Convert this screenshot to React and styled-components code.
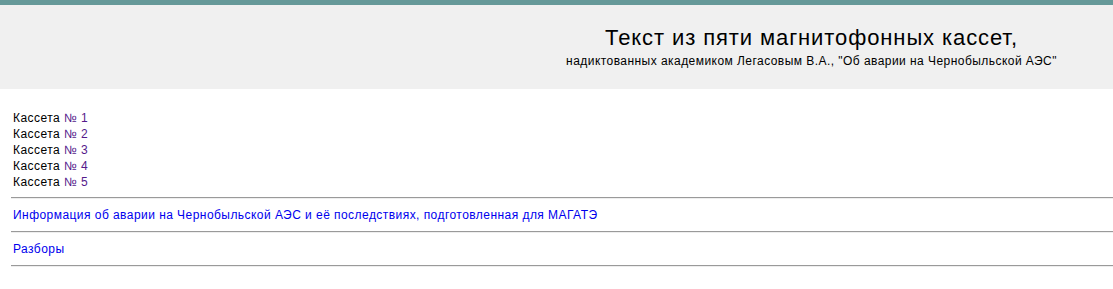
import React from "react";
import styled, { createGlobalStyle } from "styled-components";

const Global = createGlobalStyle`
  html, body { margin: 0; padding: 0; background: #ffffff; }
  body { font-family: "Liberation Sans", Arial, sans-serif; font-size: 12px; letter-spacing: 0.45px; color: #000; }
`;

const Page = styled.div`
  border-top: 5px solid #669999;
`;

const Header = styled.header`
  background: #f0f0f0;
  height: 84px;
  box-sizing: border-box;
  display: grid;
  grid-template-columns: 510px 1fr;
  padding-top: 21px;
`;

const HeaderText = styled.div`
  grid-column: 2;
  display: flex;
  flex-direction: column;
  align-items: center;
  text-align: center;
`;

const Title = styled.h1`
  margin: 0;
  font-size: 22px;
  letter-spacing: 0.9px;
  font-weight: normal;
  line-height: 24px;
`;

const Subtitle = styled.div`
  font-size: 12px;
  line-height: 16px;
  margin-top: 3px;
`;

const Content = styled.main`
  padding: 21px 0 0 11px;
`;

const CassetteList = styled.div`
  padding-left: 2px;
  line-height: 16px;
`;

const Row = styled.div`
  line-height: 16px;
`;

const Link = styled.a`
  color: ${(p) => (p.$visited ? "#551a8b" : "#0000ee")};
  text-decoration: none;
`;

const Rule = styled.hr`
  margin: ${(p) => (p.$top ?? 8)}px 0 8px;
  border: 0;
  border-top: 1px solid #9a9a9a;
  border-bottom: 1px solid #eeeeee;
  height: 0;
`;

const Section = styled.div`
  padding-left: 2px;
  line-height: 16px;
`;

export default function App() {
  return (
    <Page>
      <Global />
      <Header>
        <HeaderText>
          <Title>Текст из пяти магнитофонных кассет,</Title>
          <Subtitle>
            надиктованных академиком Легасовым В.А., "Об аварии на Чернобыльской АЭС"
          </Subtitle>
        </HeaderText>
      </Header>
      <Content>
        <CassetteList>
          {[1, 2, 3, 4, 5].map((n) => (
            <Row key={n}>
              Кассета <Link href="#" $visited>№ {n}</Link>
            </Row>
          ))}
        </CassetteList>
        <Rule $top={7} />
        <Section>
          <Link href="#">
            Информация об аварии на Чернобыльской АЭС и её последствиях, подготовленная для МАГАТЭ
          </Link>
        </Section>
        <Rule />
        <Section>
          <Link href="#">Разборы</Link>
        </Section>
        <Rule />
      </Content>
    </Page>
  );
}
